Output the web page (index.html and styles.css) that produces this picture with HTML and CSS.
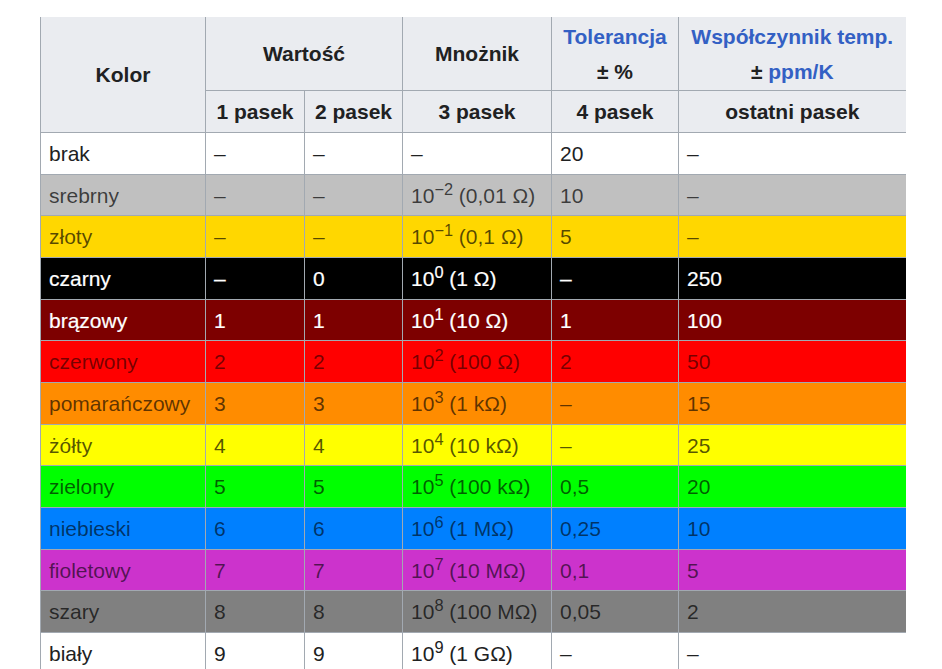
FILE: index.html
```html
<!DOCTYPE html>
<html lang="pl">
<head>
<meta charset="utf-8">
<title>Kod paskowy rezystorów</title>
<link rel="stylesheet" href="styles.css">
</head>
<body>
<div class="page">
<table class="wikitable">
  <colgroup>
    <col class="c-kolor">
    <col class="c-p1">
    <col class="c-p2">
    <col class="c-mn">
    <col class="c-tol">
    <col class="c-temp">
  </colgroup>
  <thead>
    <tr class="hrow1">
      <th rowspan="2">Kolor</th>
      <th colspan="2">Wartość</th>
      <th>Mnożnik</th>
      <th><a class="link" href="#">Tolerancja</a><br>± %</th>
      <th class="last"><a class="link" href="#">Współczynnik temp.</a><br>± <a class="link" href="#">ppm/K</a></th>
    </tr>
    <tr class="hrow2">
      <th>1 pasek</th>
      <th>2 pasek</th>
      <th>3 pasek</th>
      <th>4 pasek</th>
      <th class="last">ostatni pasek</th>
    </tr>
  </thead>
  <tbody>
    <tr class="r-brak"><td>brak</td><td>–</td><td>–</td><td>–</td><td>20</td><td class="last">–</td></tr>
    <tr class="r-srebrny"><td>srebrny</td><td>–</td><td>–</td><td>10<sup>−2</sup> (0,01 Ω)</td><td>10</td><td class="last">–</td></tr>
    <tr class="r-zloty"><td>złoty</td><td>–</td><td>–</td><td>10<sup>−1</sup> (0,1 Ω)</td><td>5</td><td class="last">–</td></tr>
    <tr class="r-czarny"><td>czarny</td><td>–</td><td>0</td><td>10<sup>0</sup> (1 Ω)</td><td>–</td><td class="last">250</td></tr>
    <tr class="r-brazowy"><td>brązowy</td><td>1</td><td>1</td><td>10<sup>1</sup> (10 Ω)</td><td>1</td><td class="last">100</td></tr>
    <tr class="r-czerwony"><td>czerwony</td><td>2</td><td>2</td><td>10<sup>2</sup> (100 Ω)</td><td>2</td><td class="last">50</td></tr>
    <tr class="r-pomaranczowy"><td>pomarańczowy</td><td>3</td><td>3</td><td>10<sup>3</sup> (1 kΩ)</td><td>–</td><td class="last">15</td></tr>
    <tr class="r-zolty"><td>żółty</td><td>4</td><td>4</td><td>10<sup>4</sup> (10 kΩ)</td><td>–</td><td class="last">25</td></tr>
    <tr class="r-zielony"><td>zielony</td><td>5</td><td>5</td><td>10<sup>5</sup> (100 kΩ)</td><td>0,5</td><td class="last">20</td></tr>
    <tr class="r-niebieski"><td>niebieski</td><td>6</td><td>6</td><td>10<sup>6</sup> (1 MΩ)</td><td>0,25</td><td class="last">10</td></tr>
    <tr class="r-fioletowy"><td>fioletowy</td><td>7</td><td>7</td><td>10<sup>7</sup> (10 MΩ)</td><td>0,1</td><td class="last">5</td></tr>
    <tr class="r-szary"><td>szary</td><td>8</td><td>8</td><td>10<sup>8</sup> (100 MΩ)</td><td>0,05</td><td class="last">2</td></tr>
    <tr class="r-bialy"><td>biały</td><td>9</td><td>9</td><td>10<sup>9</sup> (1 GΩ)</td><td>–</td><td class="last">–</td></tr>
  </tbody>
</table>
</div>
</body>
</html>
```

FILE: styles.css
```css
html, body {
  margin: 0;
  padding: 0;
  background: #ffffff;
}

.page {
  padding: 17px 0 0 40px;
  font-family: "Liberation Sans", Arial, sans-serif;
  font-size: 21px;
  color: #202122;
}

.wikitable {
  border-collapse: collapse;
  table-layout: fixed;
  width: 865px;
  background: #ffffff;
}

.c-kolor { width: 165px; }
.c-p1 { width: 99px; }
.c-p2 { width: 98px; }
.c-mn { width: 149px; }
.c-tol { width: 127px; }
.c-temp { width: 227px; }

.wikitable th,
.wikitable td {
  border: 1px solid #a2a9b1;
  line-height: 34.67px;
  padding: 4px 8px 2px;
  white-space: nowrap;
  overflow: hidden;
}

.wikitable th {
  background: #eaecf0;
  font-weight: bold;
  text-align: center;
  color: #202122;
}

.wikitable thead tr.hrow1 th {
  border-top: none;
  padding-top: 3px;
  padding-bottom: 1px;
}

.wikitable td {
  text-align: left;
}

.wikitable .last {
  border-right: none;
}

.link {
  color: #3360c4;
  text-decoration: none;
}

sup {
  font-size: 0.78em;
  line-height: 0;
  vertical-align: 0.5em;
}

/* row colours */
.r-brak td,
.r-bialy td {
  background: #ffffff;
  color: #202122;
}

.r-srebrny td { background: #c0c0c0; color: rgba(0, 0, 0, 0.7); }
.r-zloty td { background: #ffd700; color: rgba(0, 0, 0, 0.66); }
.r-czarny td { background: #000000; color: #ffffff; -webkit-text-stroke: 0.2px #ffffff; }
.r-brazowy td { background: #7d0000; color: #ffffff; -webkit-text-stroke: 0.2px #ffffff; }
.r-czerwony td { background: #ff0000; color: rgba(0, 0, 0, 0.55); }
.r-pomaranczowy td { background: #ff8c00; color: rgba(0, 0, 0, 0.64); }
.r-zolty td { background: #ffff00; color: rgba(0, 0, 0, 0.68); }
.r-zielony td { background: #00ff00; color: rgba(0, 0, 0, 0.64); }
.r-niebieski td { background: #0080ff; color: rgba(0, 0, 0, 0.6); }
.r-fioletowy td { background: #cc33cc; color: rgba(0, 0, 0, 0.6); }
.r-szary td { background: #808080; color: rgba(0, 0, 0, 0.7); }
```
